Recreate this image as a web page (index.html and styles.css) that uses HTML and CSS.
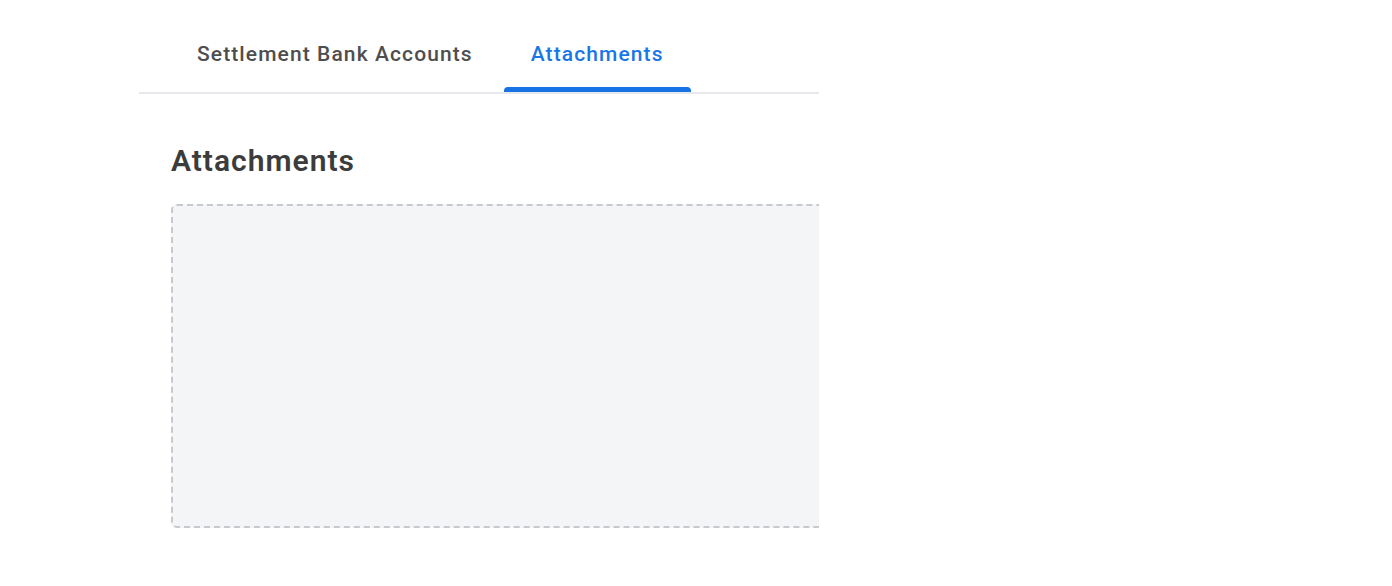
FILE: index.html
```html
<!DOCTYPE html>
<html>
<head>
<meta charset="utf-8">
<link rel="stylesheet" href="styles.css">
</head>
<body>
<div class="panel">
  <div class="tabs">
    <div class="tab">Settlement Bank Accounts</div>
    <div class="tab active">Attachments</div>
  </div>
  <div class="content">
    <h2 class="title">Attachments</h2>
    <div class="dropzone"></div>
  </div>
</div>
</body>
</html>
```
FILE: styles.css
```css
html, body {
  margin: 0;
  background: #ffffff;
  font-family: Roboto, "Liberation Sans", sans-serif;
}
.panel {
  margin-left: 139px;
  width: 680px;
  overflow: hidden;
}
.tabs {
  display: flex;
  gap: 4px;
  padding-left: 31px;
  height: 92px;
  border-bottom: 2px solid #e6e8ec;
  box-sizing: content-box;
}
.tab {
  display: flex;
  align-items: center;
  padding: 16px 27px 0;
  font-size: 21px;
  font-weight: 500;
  letter-spacing: 1.1px;
  color: #4e4e4e;
  position: relative;
}
.tab.active {
  color: #1a76e6;
}
.tab.active::after {
  content: "";
  position: absolute;
  left: 0;
  right: 0;
  bottom: 0;
  height: 5px;
  background: #1672e5;
  border-radius: 4px 4px 0 0;
}
.content {
  padding: 50px 0 0 32px;
}
.title {
  margin: 0 0 26px;
  font-size: 30px;
  font-weight: 600;
  letter-spacing: 1px;
  color: #3c3c3c;
  line-height: 34px;
}
.dropzone {
  width: 700px;
  height: 320px;
  border: 2px dashed #c8c9cf;
  border-radius: 6px;
  background: #f4f5f7;
}
```
